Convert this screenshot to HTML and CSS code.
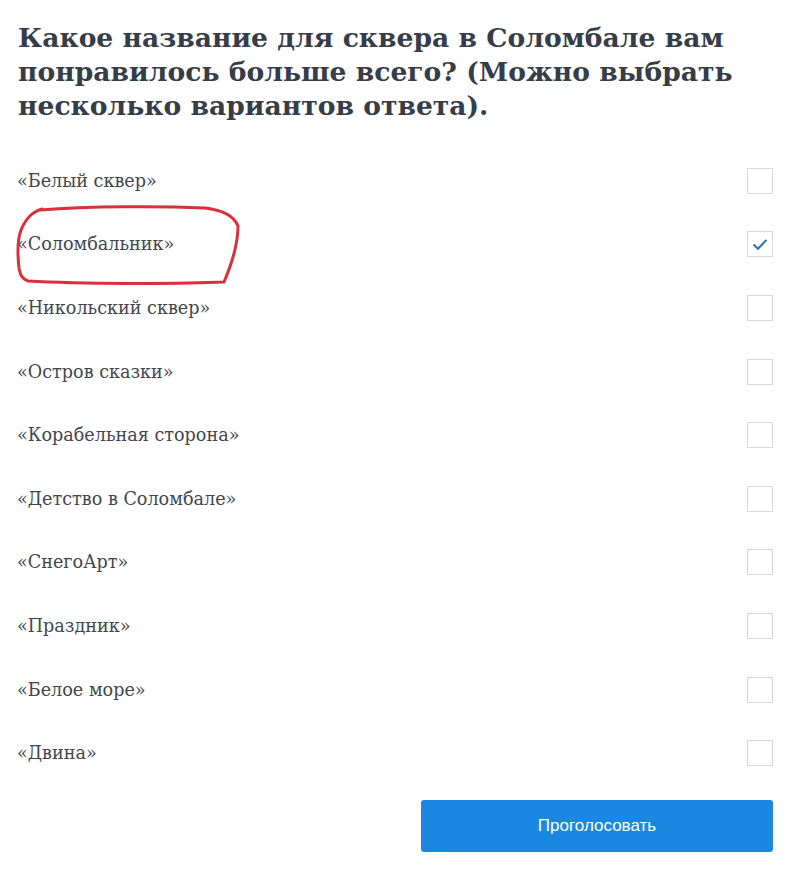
FILE: index.html
```html
<!DOCTYPE html>
<html lang="ru">
<head>
<meta charset="utf-8">
<link rel="stylesheet" href="styles.css">
</head>
<body>
<div class="poll">
  <h1 class="title">Какое название для сквера в Соломбале вам понравилось больше всего? (Можно выбрать несколько вариантов ответа).</h1>
  <ul class="options">
    <li class="option"><span class="label">«Белый сквер»</span><span class="box"></span></li>
    <li class="option"><span class="label">«Соломбальник»</span><span class="box checked"><svg viewBox="0 0 26 26" width="26" height="26"><path d="M6 13.5 L10.8 18.2 L20 8.5" fill="none" stroke="#2a74b4" stroke-width="2.2"/></svg></span></li>
    <li class="option"><span class="label">«Никольский сквер»</span><span class="box"></span></li>
    <li class="option"><span class="label">«Остров сказки»</span><span class="box"></span></li>
    <li class="option"><span class="label">«Корабельная сторона»</span><span class="box"></span></li>
    <li class="option"><span class="label">«Детство в Соломбале»</span><span class="box"></span></li>
    <li class="option"><span class="label">«СнегоАрт»</span><span class="box"></span></li>
    <li class="option"><span class="label">«Праздник»</span><span class="box"></span></li>
    <li class="option"><span class="label">«Белое море»</span><span class="box"></span></li>
    <li class="option"><span class="label">«Двина»</span><span class="box"></span></li>
  </ul>
  <div class="actions"><button class="vote">Проголосовать</button></div>
  <svg class="scribble" width="789" height="300" viewBox="0 0 789 300"><path d="M40 210 C 90 206, 160 206, 205 208 C 222 210, 234 216, 238 226 C 238 245, 230 268, 224 282 C 180 284, 80 284, 28 281 C 20 278, 20 272, 19 268 C 17 250, 18 238, 21 230 C 26 218, 32 212, 42 209" fill="none" stroke="#d8303c" stroke-width="3" stroke-linecap="round"/></svg>
</div>
</body>
</html>
```
FILE: styles.css
```css
* { box-sizing: border-box; }
html, body { margin: 0; padding: 0; background: #fff; }
.poll { position: relative; width: 789px; height: 871px; padding: 21px 16px 0 18px; }
.title {
  margin: 0;
  font-family: "DejaVu Serif", serif;
  font-weight: bold;
  font-size: 26.6px;
  line-height: 34px;
  color: #363d48;
}
.options { list-style: none; margin: 26px 0 0; padding: 0; }
.option {
  display: flex; align-items: center; justify-content: space-between;
  height: 63.6px;
}
.label {
  font-family: "DejaVu Serif", serif;
  font-size: 17.6px;
  color: #41464e;
  margin-left: -1px;
}
.box {
  width: 26px; height: 26px; border: 1px solid #d6d8dc; background: #fff;
  display: flex; align-items: center; justify-content: center;
}
.box svg { display: block; }
.actions { display: flex; justify-content: flex-end; margin-top: 15px; }
.vote {
  width: 352px; height: 52px; border: 0; border-radius: 3px;
  background: #1a88e0; color: #fff;
  font-family: "Liberation Sans", Arial, sans-serif; font-size: 17px;
}
.scribble { position: absolute; left: 0; top: 0; pointer-events: none; }
```
